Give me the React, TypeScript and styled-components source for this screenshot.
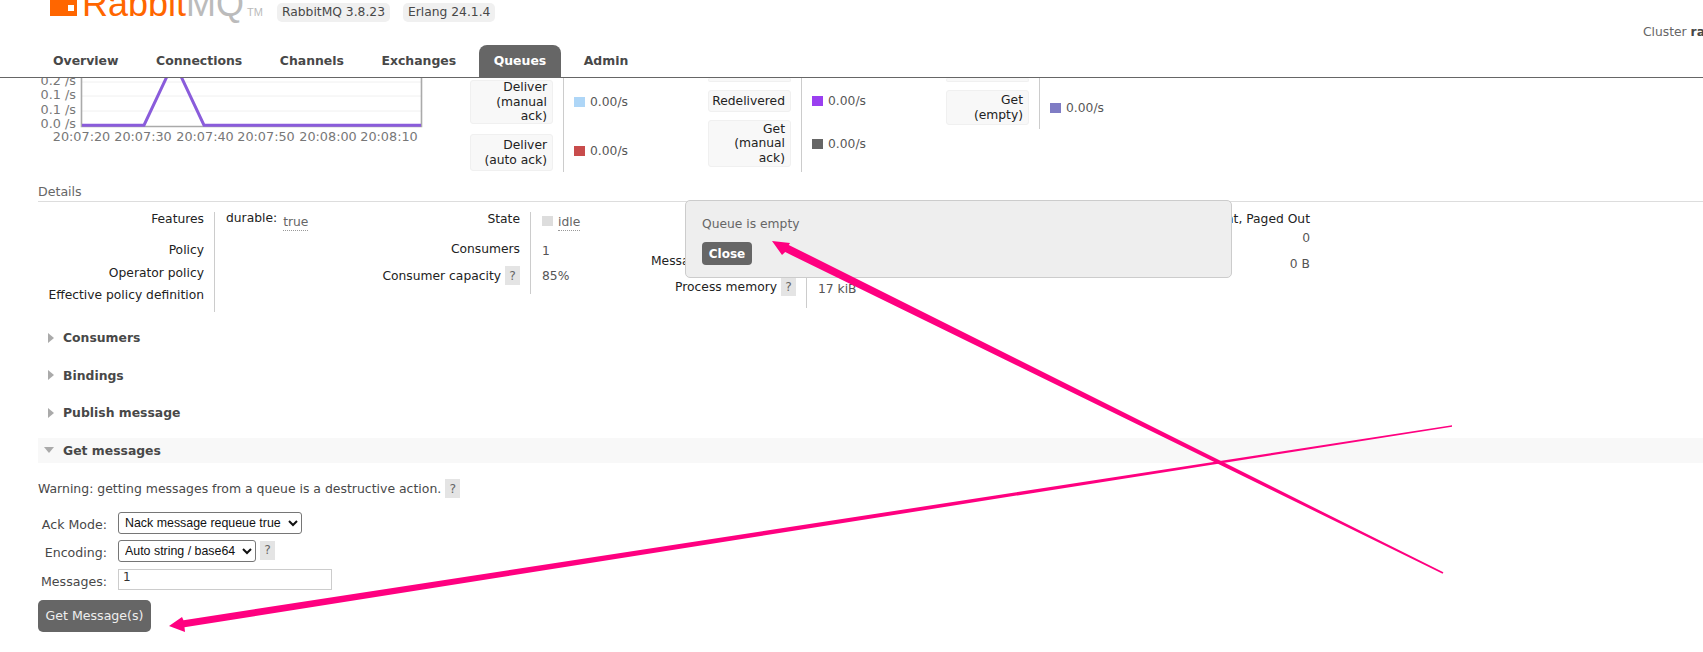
import styled, { createGlobalStyle } from 'styled-components';

const GlobalStyle = createGlobalStyle`
  html, body {
    margin: 0;
    background: #fff;
    font-family: "DejaVu Sans", Verdana, sans-serif;
    font-size: 12.3px;
    color: #484848;
  }
  * { box-sizing: border-box; }
`;

const Page = styled.div`
  position: relative;
  width: 1703px;
  height: 652px;
  overflow: hidden;
`;

const Header = styled.header`
  height: 78px;
  border-bottom: 1px solid #666;
  display: flex;
  flex-direction: column;
  justify-content: space-between;
`;
const TopRow = styled.div`
  display: flex;
  height: 46px;
  padding-left: 50px;
`;
const Logo = styled.div`
  display: flex;
  align-items: flex-end;
  height: 25px;
  margin-top: -9px;
  width: 227px;
`;
const LogoMark = styled.div`
  position: relative;
  width: 27px;
  height: 25px;
  background: #f60;
  margin-right: 5px;
  &::after {
    content: '';
    position: absolute;
    left: 18px;
    top: 14px;
    width: 6px;
    height: 6px;
    background: #fff;
  }
`;
const LogoText = styled.div`
  font-family: "Liberation Sans", Arial, sans-serif;
  font-size: 36px;
  line-height: 25px;
  color: #f60;
  white-space: nowrap;
  span { color: #bbb; }
  sup {
    font-size: 11px;
    line-height: 0;
    color: #bbb;
    vertical-align: baseline;
    margin-left: 3px;
  }
`;
const Badge = styled.span`
  height: 19px;
  line-height: 19px;
  margin-top: 3px;
  padding: 0 5px;
  background: #f0f0f0;
  border-radius: 5px;
  margin-right: 13px;
  color: #484848;
  white-space: nowrap;
`;
const Cluster = styled.div`
  margin-left: auto;
  margin-top: 25px;
  width: 60px;
  white-space: nowrap;
  color: #666;
  b { color: #484848; }
`;
const Tabs = styled.nav`
  display: flex;
  height: 32px;
  padding-left: 38px;
`;
const Tab = styled.a<{ $active?: boolean }>`
  display: flex;
  align-items: center;
  padding: 0 15px 2px;
  margin-right: 7.5px;
  font-size: 12.45px;
  font-weight: bold;
  border-radius: 8px 8px 0 0;
  color: ${(p) => (p.$active ? '#fff' : '#484848')};
  background: ${(p) => (p.$active ? '#666' : 'transparent')};
`;

const Main = styled.main`
  padding-left: 38px;
`;

const RatesRow = styled.section`
  display: flex;
  height: 94px;
`;
const ChartBox = styled.svg`
  display: block;
  flex: 0 0 432px;
  height: 66px;
  font-family: "DejaVu Sans", Verdana, sans-serif;
  font-size: 12.8px;
  fill: #777;
`;
const StatGroup = styled.div`
  flex: 0 0 238px;
`;
const StatRow = styled.div`
  display: flex;
`;
const StatLabelCell = styled.div<{ $pt: number; $pb: number }>`
  flex: 0 0 94px;
  padding: ${(p) => p.$pt}px 0 ${(p) => p.$pb}px 0;
  border-right: 1px solid #ccc;
`;
const StatBox = styled.div<{ $h: number; $cut?: boolean }>`
  display: flex;
  align-items: center;
  justify-content: flex-end;
  width: 83px;
  height: ${(p) => p.$h}px;
  padding: 0 5px;
  text-align: right;
  line-height: 14.5px;
  color: #222;
  background: #f8f8f8;
  border: 1px solid #f0f0f0;
  border-top: ${(p) => (p.$cut ? 'none' : '1px solid #f0f0f0')};
  border-radius: 3px;
  white-space: nowrap;
`;
const StatValue = styled.div<{ $pb?: number }>`
  display: flex;
  align-items: center;
  padding: 0 0 ${(p) => p.$pb ?? 0}px 10px;
  gap: 5px;
  color: #555;
`;
const Swatch = styled.i<{ $color: string }>`
  display: block;
  flex: none;
  width: 11px;
  height: 10px;
  background: ${(p) => p.$color};
`;
const StateSwatch = styled(Swatch)`
  margin: 1px 5px 0 0;
`;

const DetailsTitle = styled.h3`
  margin: 0;
  height: 30px;
  padding-top: 13px;
  font-size: 12.6px;
  line-height: 14px;
  font-weight: normal;
  color: #666;
  border-bottom: 1px solid #ddd;
`;
const DetailsRow = styled.section`
  display: flex;
  padding-top: 10px;
  height: 110px;
  align-items: flex-start;
`;
const FactTable = styled.div<{ $width: number; $label: number }>`
  display: grid;
  grid-template-columns: ${(p) => p.$label}px 1fr;
  width: ${(p) => p.$width}px;
`;
const FactLabel = styled.div<{ $h: number; $pt: number }>`
  display: flex;
  justify-content: flex-end;
  gap: 4px;
  height: ${(p) => p.$h}px;
  padding: ${(p) => p.$pt}px 10px 0 0;
  line-height: 14px;
  color: #222;
  white-space: nowrap;
`;
const FactValue = styled.div<{ $pt: number }>`
  display: flex;
  padding: ${(p) => p.$pt}px 0 0 11px;
  line-height: 14px;
  color: #555;
  border-left: 1px solid #ccc;
  white-space: nowrap;
`;
const Dotted = styled.span`
  color: #666;
  border-bottom: 1px dotted #999;
  height: 16px;
`;
const Durable = styled.span`
  color: #222;
  margin: -4px 6px 0 0;
`;
const Help = styled.span`
  display: inline-flex;
  align-items: center;
  justify-content: center;
  flex: none;
  width: 15px;
  height: 19px;
  margin-top: -3px;
  background: #e4e4e4;
  color: #666;
`;
const TotalsColumn = styled.div`
  flex: 0 0 310px;
  text-align: right;
  line-height: 14px;
  color: #555;
`;
const TotalsHead = styled.div`
  height: 19px;
  color: #222;
`;
const TotalsCell = styled.div`
  height: 26px;
`;

const Sections = styled.div`
  display: flex;
  flex-direction: column;
  gap: 12.67px;
  padding-top: 13px;
`;
const SectionHead = styled.h2<{ $open?: boolean }>`
  display: flex;
  align-items: center;
  height: 25px;
  margin: 0;
  padding-left: 10px;
  font-size: 12.4px;
  font-weight: bold;
  color: #484848;
  background: ${(p) => (p.$open ? '#f8f8f8' : 'transparent')};
`;
const Arrow = styled.i<{ $open?: boolean }>`
  display: block;
  width: 0;
  height: 0;
  border-style: solid;
  ${(p) =>
    p.$open
      ? `border-width: 6px 5.5px 0; border-color: #aaa transparent transparent; margin: 0 9px 0 -4px;`
      : `border-width: 5.5px 0 5.5px 6px; border-color: transparent transparent transparent #aaa; margin-right: 9px;`}
`;
const Warning = styled.p`
  display: flex;
  align-items: center;
  gap: 4px;
  height: 19px;
  margin: 16px 0 14px;
  font-size: 12.45px;
  color: #484848;
`;
const WarningHelp = styled(Help)`
  margin-top: 0;
`;
const FormRow = styled.div<{ $h: number }>`
  display: flex;
  align-items: flex-start;
  gap: 11px;
  height: ${(p) => p.$h}px;
`;
const FormLabel = styled.label`
  width: 69px;
  padding-top: 6px;
  text-align: right;
  font-size: 12.6px;
  line-height: 14px;
  color: #484848;
  white-space: nowrap;
`;
const Select = styled.select<{ $width: number }>`
  width: ${(p) => p.$width}px;
  height: 22px;
  padding-left: 2px;
  font-family: "Liberation Sans", Arial, sans-serif;
  font-size: 12.4px;
  color: #111;
  background: #fff;
  border: 1px solid #767676;
  border-radius: 3px;
`;
const FormHelp = styled(Help)`
  margin: 1px 0 0 -7px;
`;
const TextInput = styled.input`
  display: block;
  width: 214px;
  height: 21px;
  padding: 0 4px 5px;
  font-family: "DejaVu Sans", Verdana, sans-serif;
  font-size: 12px;
  color: #333;
  border: 1px solid #ccc;
  outline: none;
`;
const SubmitButton = styled.button`
  display: block;
  width: 113px;
  height: 32px;
  padding: 0;
  font-family: "DejaVu Sans", Verdana, sans-serif;
  font-size: 12.6px;
  color: #eee;
  background: #666;
  border: none;
  border-radius: 5px;
`;

const Popup = styled.div`
  position: absolute;
  left: 685px;
  top: 200px;
  width: 547px;
  height: 78px;
  padding: 16px;
  background: #eee;
  border: 1px solid #ccc;
  border-radius: 5px;
  color: #666;
  p { margin: 0 0 11px; line-height: 14px; }
`;
const CloseButton = styled.button`
  display: block;
  width: 50px;
  height: 23px;
  padding: 0;
  font-family: "DejaVu Sans", Verdana, sans-serif;
  font-size: 12px;
  font-weight: bold;
  color: #fff;
  background: #666;
  border: none;
  border-radius: 4px;
`;
const Annotations = styled.svg`
  position: absolute;
  left: 0;
  top: 0;
  pointer-events: none;
`;

const xLabels = [
  ['20:07:20', 81.5],
  ['20:07:30', 143],
  ['20:07:40', 205],
  ['20:07:50', 266],
  ['20:08:00', 328],
  ['20:08:10', 389],
] as const;
const yLabels = [
  ['0.2 /s', 85],
  ['0.1 /s', 99],
  ['0.1 /s', 114],
  ['0.0 /s', 128],
] as const;

function RateChart() {
  return (
    <ChartBox viewBox="38 78 432 66">
      {[82, 96, 111].map((y) => (
        <line key={y} x1={82} x2={421} y1={y} y2={y} stroke="#f0f0f0" />
      ))}
      <path d="M81.5 70V126.5H421.5V70" fill="none" stroke="#aaa" strokeWidth="1.6" />
      <path d="M82 125.2H144L170 70H178L204 125.2H421" fill="none" stroke="#8a5cdb" strokeWidth="3" />
      {yLabels.map(([t, y], i) => (
        <text key={i} x={76} y={y} textAnchor="end">{t}</text>
      ))}
      {xLabels.map(([t, x]) => (
        <text key={t} x={x} y={141} textAnchor="middle">{t}</text>
      ))}
    </ChartBox>
  );
}

export default function App() {
  return (
    <Page>
      <GlobalStyle />
      <Header>
        <TopRow>
          <Logo>
            <LogoMark />
            <LogoText>Rabbit<span>MQ</span><sup>TM</sup></LogoText>
          </Logo>
          <Badge>RabbitMQ 3.8.23</Badge>
          <Badge>Erlang 24.1.4</Badge>
          <Cluster>Cluster <b>rabbit@node1</b></Cluster>
        </TopRow>
        <Tabs>
          <Tab>Overview</Tab>
          <Tab>Connections</Tab>
          <Tab>Channels</Tab>
          <Tab>Exchanges</Tab>
          <Tab $active>Queues</Tab>
          <Tab>Admin</Tab>
        </Tabs>
      </Header>
      <Main>
        <RatesRow>
          <RateChart />
          <StatGroup>
            <StatRow>
              <StatLabelCell $pt={2} $pb={5}>
                <StatBox $h={44}>Deliver<br />(manual<br />ack)</StatBox>
              </StatLabelCell>
              <StatValue $pb={3}><Swatch $color="#aed6f7" />0.00/s</StatValue>
            </StatRow>
            <StatRow>
              <StatLabelCell $pt={5} $pb={1}>
                <StatBox $h={37}>Deliver<br />(auto ack)</StatBox>
              </StatLabelCell>
              <StatValue><Swatch $color="#c84c4c" />0.00/s</StatValue>
            </StatRow>
          </StatGroup>
          <StatGroup>
            <StatRow>
              <StatLabelCell $pt={0} $pb={4}>
                <StatBox $h={4} $cut />
              </StatLabelCell>
            </StatRow>
            <StatRow>
              <StatLabelCell $pt={4} $pb={4}>
                <StatBox $h={22}>Redelivered</StatBox>
              </StatLabelCell>
              <StatValue><Swatch $color="#9a3ff0" />0.00/s</StatValue>
            </StatRow>
            <StatRow>
              <StatLabelCell $pt={4} $pb={5}>
                <StatBox $h={47}>Get<br />(manual<br />ack)</StatBox>
              </StatLabelCell>
              <StatValue><Swatch $color="#666" />0.00/s</StatValue>
            </StatRow>
          </StatGroup>
          <StatGroup>
            <StatRow>
              <StatLabelCell $pt={0} $pb={4}>
                <StatBox $h={4} $cut />
              </StatLabelCell>
            </StatRow>
            <StatRow>
              <StatLabelCell $pt={4} $pb={4}>
                <StatBox $h={35}>Get<br />(empty)</StatBox>
              </StatLabelCell>
              <StatValue><Swatch $color="#7f7cc4" />0.00/s</StatValue>
            </StatRow>
          </StatGroup>
        </RatesRow>

        <DetailsTitle>Details</DetailsTitle>
        <DetailsRow>
          <FactTable $width={292} $label={176}>
            <FactLabel $h={26} $pt={0}>Features</FactLabel>
            <FactValue $pt={3}><Durable>durable:</Durable><Dotted>true</Dotted></FactValue>
            <FactLabel $h={24} $pt={5}>Policy</FactLabel>
            <FactValue $pt={5} />
            <FactLabel $h={22} $pt={4}>Operator policy</FactLabel>
            <FactValue $pt={4} />
            <FactLabel $h={28} $pt={4}>Effective policy definition</FactLabel>
            <FactValue $pt={4} />
          </FactTable>
          <FactTable $width={310} $label={200}>
            <FactLabel $h={25} $pt={0}>State</FactLabel>
            <FactValue $pt={3}><StateSwatch $color="#ddd" /><Dotted>idle</Dotted></FactValue>
            <FactLabel $h={26} $pt={5}>Consumers</FactLabel>
            <FactValue $pt={7}>1</FactValue>
            <FactLabel $h={31} $pt={6}>Consumer capacity <Help>?</Help></FactLabel>
            <FactValue $pt={6}>85%</FactValue>
          </FactTable>
          <FactTable $width={360} $label={166}>
            <FactLabel $h={38} $pt={0}>Messages <Help>?</Help></FactLabel>
            <FactValue $pt={0} />
            <FactLabel $h={25} $pt={4}>Message body bytes <Help>?</Help></FactLabel>
            <FactValue $pt={4} />
            <FactLabel $h={33} $pt={5}>Process memory <Help>?</Help></FactLabel>
            <FactValue $pt={7}>17 kiB</FactValue>
          </FactTable>
          <TotalsColumn>
            <TotalsHead>Transient, Paged Out</TotalsHead>
            <TotalsCell>0</TotalsCell>
            <TotalsCell>0 B</TotalsCell>
          </TotalsColumn>
        </DetailsRow>

        <Sections>
          <SectionHead><Arrow />Consumers</SectionHead>
          <SectionHead><Arrow />Bindings</SectionHead>
          <SectionHead><Arrow />Publish message</SectionHead>
          <SectionHead $open><Arrow $open />Get messages</SectionHead>
        </Sections>

        <Warning>
          Warning: getting messages from a queue is a destructive action.
          <WarningHelp>?</WarningHelp>
        </Warning>
        <FormRow $h={28}>
          <FormLabel>Ack Mode:</FormLabel>
          <Select $width={184} defaultValue="nack">
            <option value="nack">Nack message requeue true</option>
          </Select>
        </FormRow>
        <FormRow $h={29}>
          <FormLabel>Encoding:</FormLabel>
          <Select $width={138} defaultValue="auto">
            <option value="auto">Auto string / base64</option>
          </Select>
          <FormHelp>?</FormHelp>
        </FormRow>
        <FormRow $h={31}>
          <FormLabel>Messages:</FormLabel>
          <TextInput defaultValue="1" />
        </FormRow>
        <SubmitButton>Get Message(s)</SubmitButton>
      </Main>

      <Popup>
        <p>Queue is empty</p>
        <CloseButton>Close</CloseButton>
      </Popup>

      <Annotations width="1703" height="652" viewBox="0 0 1703 652">
        <polygon fill="#ff0080" points="772,241 790,243 788.8,244.9 1443.4,572.3 1442.6,573.7 785.2,252.1 782,255" />
        <polygon fill="#ff0080" points="169,626 182,617 183.5,620.2 1452,425.3 1452,426.7 184.5,627.2 185,632" />
      </Annotations>
    </Page>
  );
}
